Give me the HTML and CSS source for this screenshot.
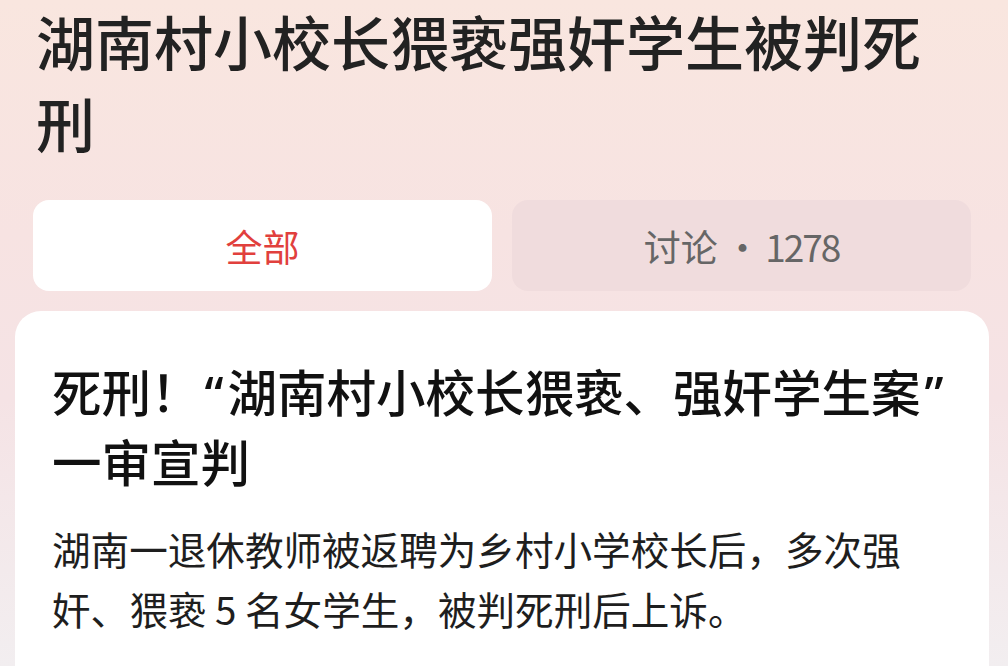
FILE: index.html
```html
<!DOCTYPE html>
<html lang="zh-CN">
<head>
<meta charset="utf-8">
<title>湖南村小校长猥亵强奸学生被判死刑</title>
<link rel="stylesheet" href="styles.css">
</head>
<body>
<div class="page">
  <h1 class="title">湖南村小校长猥亵强奸学生被判死刑</h1>
  <div class="tabs">
    <div class="tab tab-active">全部</div>
    <div class="tab tab-muted">讨论<span class="tab-count"> · 1278</span></div>
  </div>
  <div class="card">
    <h2 class="card-title">死刑！<span class="quote">“</span>湖南村小校长猥亵、强奸学生案<span class="quote">”</span>一审宣判</h2>
    <p class="card-text">湖南一退休教师被返聘为乡村小学校长后，多次强奸、猥亵 5 名女学生，被判死刑后上诉。</p>
  </div>
</div>
</body>
</html>
```

FILE: styles.css
```css
html, body {
  margin: 0;
  padding: 0;
}
body {
  width: 1008px;
  height: 666px;
  overflow: hidden;
  font-family: "Noto Sans CJK SC", "Noto Sans", sans-serif;
  background: linear-gradient(180deg, #f9e6df 0%, #f7e3e2 35%, #f5e3e5 60%, #f2eef0 100%);
}
.page {
  display: flex;
  flex-direction: column;
}
.title {
  margin: 0 0 0 36px;
  width: 920px;
  font-size: 59px;
  line-height: 82px;
  font-weight: 500;
  color: #222222;
}
.tabs {
  display: grid;
  grid-template-columns: 459px 459px;
  gap: 20px;
  margin: 36px 0 0 33px;
}
.tab {
  height: 91px;
  border-radius: 16px;
  display: flex;
  align-items: center;
  justify-content: center;
  font-size: 37px;
}
.tab-active {
  background: #ffffff;
  color: #e1403d;
}
.tab-muted {
  background: #f0dcdd;
  color: #666666;
}
.tab-count {
  white-space: pre;
  letter-spacing: -2px;
}
.card {
  margin: 20px 0 0 15px;
  width: 974px;
  box-sizing: border-box;
  padding: 46px 0 40px 37px;
  background: #ffffff;
  border-radius: 26px 26px 0 0;
  min-height: 360px;
}
.card-title {
  margin: 0;
  width: 920px;
  font-size: 49.5px;
  line-height: 67px;
  font-weight: 500;
  color: #111111;
}
.quote {
  font-family: "Noto Sans", sans-serif;
  padding: 0 4px;
}
.card-text {
  margin: 24px 0 0 0;
  width: 880px;
  font-size: 38.6px;
  line-height: 60px;
  font-weight: 400;
  color: #1e1e1e;
}
```
